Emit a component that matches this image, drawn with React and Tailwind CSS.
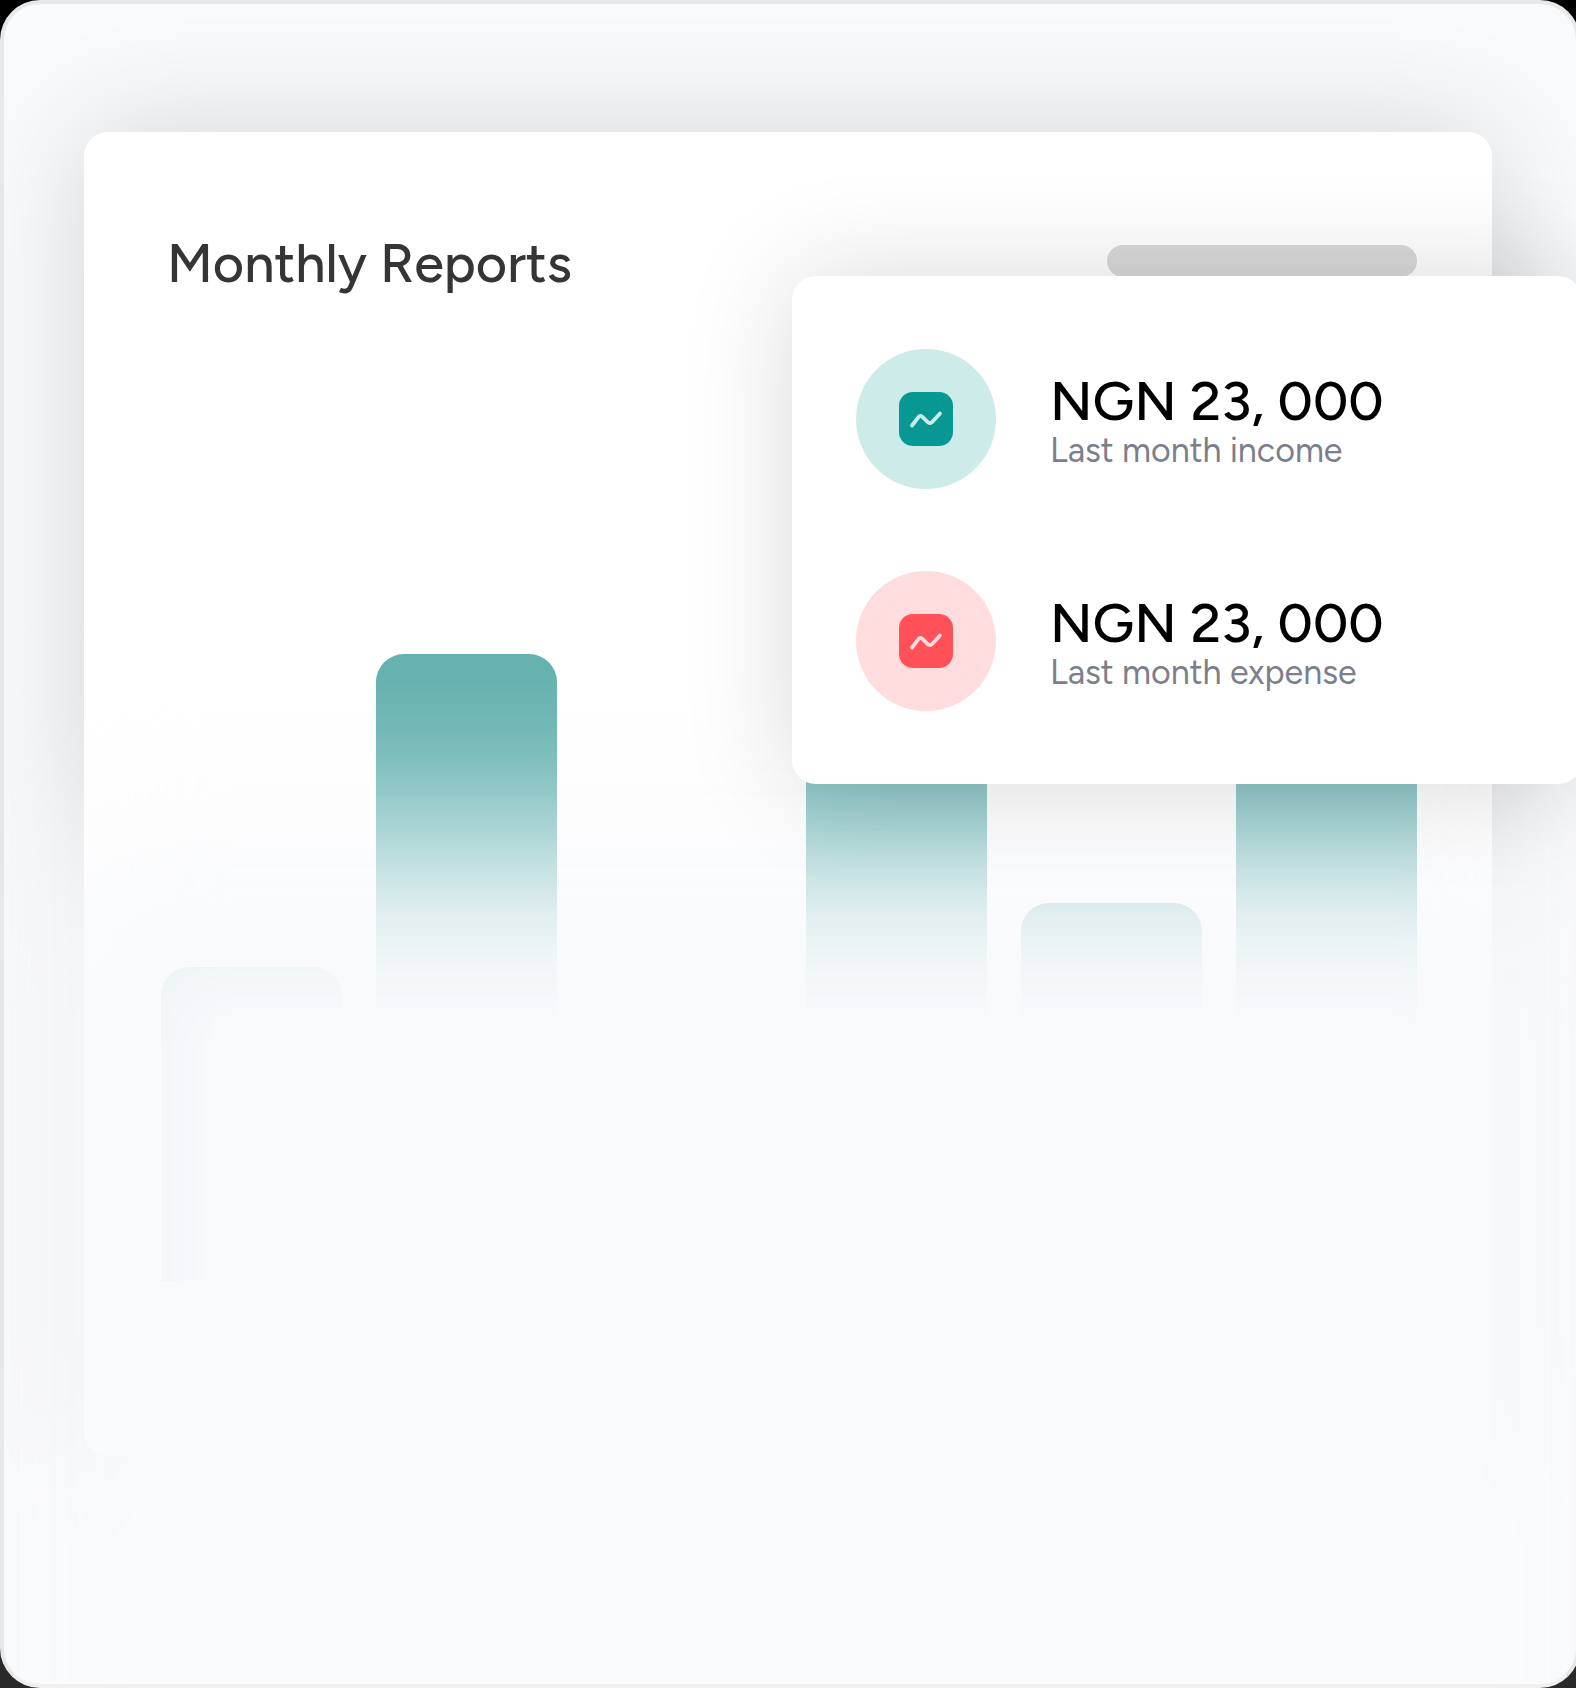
const BARS = [
  { id: 'b1', height: 314 },
  { id: 'b2', height: 627 },
  { id: 'b3', height: 180 },
  { id: 'b4', height: 560 },
  { id: 'b5', height: 378 },
  { id: 'b6', height: 560 },
];

const SUMMARY = [
  { label: 'Last month income', amount: 'NGN 23, 000', ring: 'bg-[#cdebe9]', tile: 'bg-[#089894]', stroke: '#cdebe9' },
  { label: 'Last month expense', amount: 'NGN 23, 000', ring: 'bg-[#ffdcde]', tile: 'bg-[#ff5157]', stroke: '#ffdcde' },
];

const TrendIcon = ({ stroke }) => (
  <svg viewBox="0 0 54 54" className="size-full" fill="none" aria-hidden="true">
    <path
      d="M13 33.5 L19.3 25.3 Q21.4 22.7 23.7 25.2 L28.4 29.8 Q31 32.3 33.4 29.7 L41 21.5"
      stroke={stroke}
      strokeWidth="3.8"
      strokeLinecap="round"
      strokeLinejoin="round"
    />
  </svg>
);

const SummaryItem = ({ label, amount, ring, tile, stroke }) => (
  <li className="flex items-center gap-[54px]">
    <span className={`flex size-[140px] shrink-0 items-center justify-center rounded-full ${ring}`}>
      <span className={`size-[54px] rounded-[14px] ${tile}`}>
        <TrendIcon stroke={stroke} />
      </span>
    </span>
    <div className="pt-1">
      <p className="text-[55px] leading-[60px] font-medium text-black">{amount}</p>
      <p className="text-[34px] leading-[40px] text-[#7b7f8c]">{label}</p>
    </div>
  </li>
);

const App = () => {
  return (
    <main className="flex min-h-screen overflow-hidden bg-linear-to-b from-black to-[#2a2a2a] font-['Figtree','Inter',sans-serif]">
      <div className="relative -mr-1 flex-1 overflow-hidden rounded-[40px] border-4 border-[#e7e8ea] border-b-[#f0f0f1] bg-[#f9fafc] pt-32 pr-21 pb-57 pl-20">
        <section className="relative rounded-3xl bg-white pt-[102px] pr-[75px] pb-[175px] pl-[77px] shadow-[0_0_120px_rgba(0,0,0,0.15)]">
          <header className="flex items-start justify-between">
            <h1 className="pl-[6px] text-[54px] leading-[60px] font-medium text-[#353535]">Monthly Reports</h1>
            <div className="mt-[11px] h-8 w-[310px] rounded-full bg-[#d9d9d9]" />
          </header>

          <div className="flex h-[987px] items-end gap-[34px]">
            {BARS.map((bar) => (
              <div key={bar.id} className="flex-1 rounded-t-[28px] bg-[#63b1af]" style={{ height: bar.height }} />
            ))}
          </div>
        </section>

        {/* soft fade over the lower half of the report */}
        <div className="pointer-events-none absolute top-[828px] -right-8 -bottom-60 left-4 bg-[#f9fafc] blur-[88px]" />

        <section className="absolute top-[272px] -right-[6px] w-[790px] rounded-3xl bg-white py-[73px] pl-16 shadow-[0_0_110px_rgba(0,0,0,0.15)]">
          <ul className="space-y-[82px]">
            {SUMMARY.map((item) => (
              <SummaryItem key={item.label} {...item} />
            ))}
          </ul>
        </section>
      </div>
    </main>
  );
};

export default App;
